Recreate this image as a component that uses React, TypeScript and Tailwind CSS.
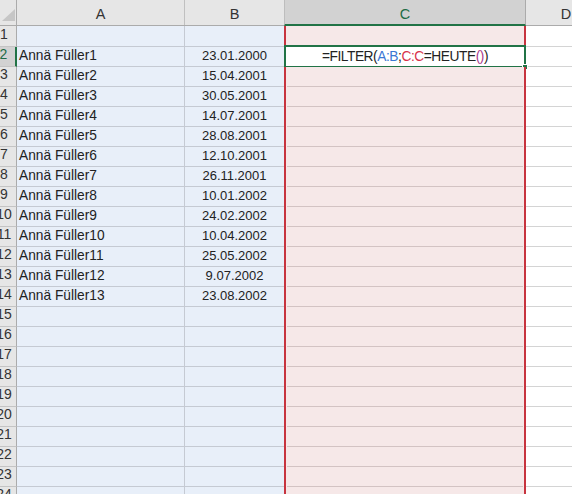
const names: [string, string][] = [
  ["Annä Füller1", "23.01.2000"],
  ["Annä Füller2", "15.04.2001"],
  ["Annä Füller3", "30.05.2001"],
  ["Annä Füller4", "14.07.2001"],
  ["Annä Füller5", "28.08.2001"],
  ["Annä Füller6", "12.10.2001"],
  ["Annä Füller7", "26.11.2001"],
  ["Annä Füller8", "10.01.2002"],
  ["Annä Füller9", "24.02.2002"],
  ["Annä Füller10", "10.04.2002"],
  ["Annä Füller11", "25.05.2002"],
  ["Annä Füller12", "9.07.2002"],
  ["Annä Füller13", "23.08.2002"],
];

const rows = Array.from({ length: 25 }, (_, i) => i + 1);

const Formula = () => (
  <span className="whitespace-nowrap tracking-[-0.45px]">
    =FILTER(<span className="text-[#3b78d4]">A:B</span>;<span className="text-[#d8324a]">C:C</span>=HEUTE
    <span className="text-[#a8388c]">()</span>)
  </span>
);

const App = () => {
  return (
    <div className="w-[572px] h-[494px] overflow-hidden bg-white text-[13.75px] text-[#222] font-['Liberation_Sans',Arial,sans-serif] select-none">
      {/* column headers */}
      <div className="flex h-[26px] bg-[#e6e6e6] border-b border-[#ababab]">
        <div className="w-[25px] -ml-[8px] shrink-0 border-r border-[#ababab] flex items-end justify-end pb-[4px] pr-[1px]">
          <svg width="13" height="12" viewBox="0 0 13 12">
            <polygon points="13,0 13,12 0,12" fill="#c6c6c6" />
          </svg>
        </div>
        <div className="w-[168px] shrink-0 border-r border-[#c0c0c0] flex items-center justify-center pt-[5px] text-[14.5px] text-[#333]">A</div>
        <div className="w-[99px] shrink-0 flex items-center justify-center pt-[5px] text-[14.5px] text-[#333]">B</div>
        <div className="w-[242px] shrink-0 bg-[#d2d2d2] border-l border-[#bdbdbd] border-r border-r-[#ababab] border-b-2 border-b-[#217346] -mb-px flex items-center justify-center pt-[5px] text-[14.5px] text-[#1e6b45]">C</div>
        <div className="w-[80px] shrink-0 flex items-center justify-center pt-[5px] text-[14.5px] text-[#333]">D</div>
      </div>

      {rows.map((r) => {
        const data = r >= 2 && r <= 14 ? names[r - 2] : null;
        const active = r === 2;
        return (
          <div key={r} className={`flex ${r === 1 ? "h-[21px]" : "h-[20px]"}`}>
            <div
              className={`w-[25px] -ml-[8px] shrink-0 border-b border-[#c4c4c4] flex items-end justify-center pb-[1px] text-[14px] ${
                active
                  ? "bg-[#d2d2d2] border-r-2 border-r-[#217346] text-[#1e6b45]"
                  : "bg-[#e6e6e6] border-r border-r-[#ababab] text-[#333]"
              }`}
            >
              {r}
            </div>
            <div className="w-[168px] shrink-0 bg-[#e8eff9] border-r border-b border-[#c5cad3] flex items-end pl-[2px] pb-[2px] leading-[16px]">
              {data ? data[0] : ""}
            </div>
            <div className="w-[99px] shrink-0 bg-[#e8eff9] border-b border-[#c5cad3] flex items-end justify-center pb-[2px] leading-[16px] text-[13px]">
              {data ? data[1] : ""}
            </div>
            <div className="w-[242px] shrink-0 relative bg-[#f6e8e8] border-x-2 border-x-[#c7343f] flex">
              <div className="flex-1 border-b border-[#d3c3c3] ml-[1px] mr-[1px]" />
              {active && (
                <div className="absolute -top-[2px] -left-[2px] -right-[2px] -bottom-[1px] bg-white border-2 border-[#217346] flex items-end justify-center pb-[1px] leading-[16px]">
                  <Formula />
                  <div className="absolute -right-[4px] -bottom-[4px] w-[6px] h-[6px] bg-[#217346] border border-white" />
                </div>
              )}
            </div>
            <div className="w-[80px] shrink-0 border-b border-[#d4d4d4]" />
          </div>
        );
      })}
    </div>
  );
};

export default App;
